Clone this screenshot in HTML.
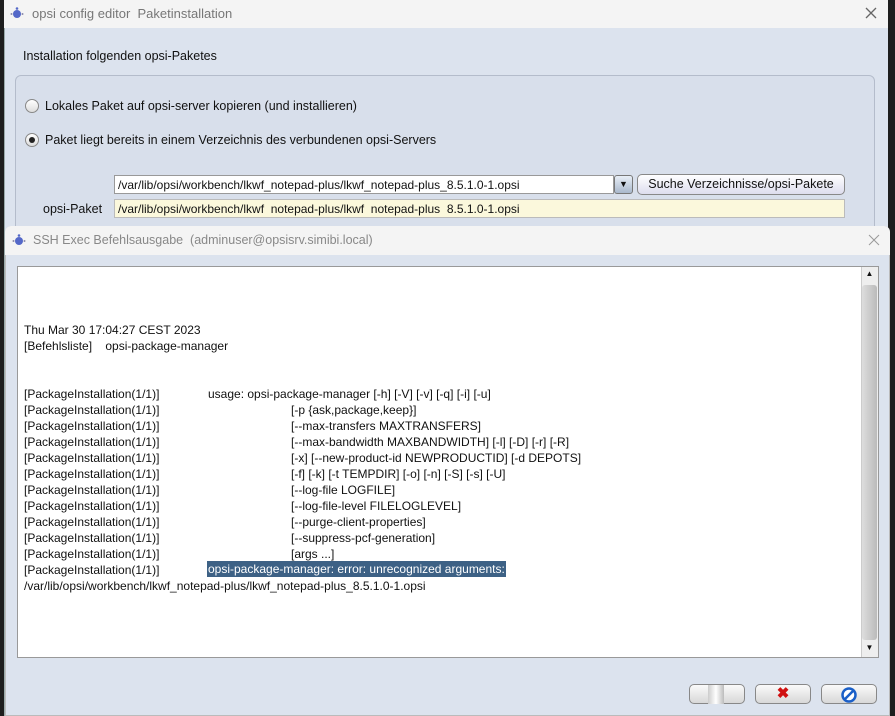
<!DOCTYPE html>
<html><head><style>
*{margin:0;padding:0;box-sizing:border-box}
body{width:895px;height:716px;overflow:hidden;background:#1e1e1e;font-family:"Liberation Sans",Arial,sans-serif;font-size:12px;color:#111;position:relative}
.a{position:absolute}
.t{white-space:pre}
</style></head><body>
<div class="a" style="left:4px;top:0;width:884px;height:716px;background:#dce3ee;border-left:1px solid #9aa"></div>
<div class="a" style="left:4px;top:0;width:884px;height:28px;background:#f4f4f4"></div>
<div class="a" style="left:10px;top:6px;width:14px;height:14px"><svg width="14" height="14"><circle cx="7" cy="8" r="4" fill="#5468c8"/><circle cx="7" cy="2.5" r="1.3" fill="#5468c8"/><circle cx="1.5" cy="8" r="1" fill="#88a"/><circle cx="12.5" cy="8" r="1" fill="#88a"/></svg></div>
<div class="a t" style="left:32px;top:6px;font-size:13px;color:#777">opsi config editor  Paketinstallation</div>
<svg class="a" style="left:865px;top:7px" width="12" height="12"><path d="M1 1L11 11M11 1L1 11" stroke="#666" stroke-width="1.3"/></svg>
<div class="a t" style="left:23px;top:49px;font-size:12.5px">Installation folgenden opsi-Paketes</div>
<div class="a" style="left:15px;top:75px;width:860px;height:160px;border:1px solid #b4bccb;border-radius:6px;background:#d8dfeb"></div>
<div class="a" style="left:25px;top:99px;width:14px;height:14px;border-radius:50%;border:1px solid #888;background:linear-gradient(#fff,#ddd)"></div>
<div class="a t" style="left:45px;top:99px;font-size:12.5px">Lokales Paket auf opsi-server kopieren (und installieren)</div>
<div class="a" style="left:25px;top:133px;width:14px;height:14px;border-radius:50%;border:1px solid #888;background:linear-gradient(#fff,#ddd)"><div class="a" style="left:3px;top:3px;width:6px;height:6px;border-radius:50%;background:#222"></div></div>
<div class="a t" style="left:45px;top:133px;font-size:12.5px">Paket liegt bereits in einem Verzeichnis des verbundenen opsi-Servers</div>
<div class="a t" style="left:114px;top:175px;width:500px;height:19px;background:#fff;border:1px solid #999;padding:2px 3px">/var/lib/opsi/workbench/lkwf_notepad-plus/lkwf_notepad-plus_8.5.1.0-1.opsi</div>
<div class="a" style="left:614px;top:175px;width:19px;height:19px;border:1px solid #777;border-radius:3px;background:linear-gradient(#e8eef6,#a9b8cc);font-size:9px;text-align:center;line-height:17px">▼</div>
<div class="a t" style="left:637px;top:174px;width:208px;height:21px;border:1px solid #888;border-radius:5px;background:linear-gradient(#fff,#dde);text-align:center;line-height:19px;font-size:12.5px">Suche Verzeichnisse/opsi-Pakete</div>
<div class="a t" style="left:43px;top:202px;font-size:12.5px">opsi-Paket</div>
<div class="a t" style="left:114px;top:199px;width:731px;height:19px;background:#fbf8dc;border:1px solid #bbb;padding:2px 3px">/var/lib/opsi/workbench/lkwf  notepad-plus/lkwf  notepad-plus  8.5.1.0-1.opsi</div>
<div class="a" style="left:5px;top:226px;width:885px;height:490px;background:#dce3ee;border:1px solid #bbb;border-radius:6px 6px 0 0"></div>
<div class="a" style="left:5px;top:226px;width:885px;height:29px;background:#f4f4f4;border-radius:6px 6px 0 0"></div>
<div class="a" style="left:12px;top:233px;width:14px;height:14px"><svg width="14" height="14"><circle cx="7" cy="8" r="4" fill="#5468c8"/><circle cx="7" cy="2.5" r="1.3" fill="#5468c8"/><circle cx="1.5" cy="8" r="1" fill="#88a"/><circle cx="12.5" cy="8" r="1" fill="#88a"/></svg></div>
<div class="a t" style="left:33px;top:233px;font-size:12.5px;color:#888">SSH Exec Befehlsausgabe  (adminuser@opsisrv.simibi.local)</div>
<svg class="a" style="left:868px;top:234px" width="12" height="12"><path d="M1 1L11 11M11 1L1 11" stroke="#999" stroke-width="1"/></svg>
<div class="a" style="left:17px;top:266px;width:862px;height:392px;background:#fff;border:1px solid #999"></div>
<div class="a" style="left:861px;top:267px;width:17px;height:390px;background:#eee;border-left:1px solid #ccc"></div>
<div class="a" style="left:863px;top:269px;width:13px;height:14px;font-size:8px;text-align:center">▲</div>
<div class="a" style="left:862px;top:285px;width:15px;height:355px;background:linear-gradient(90deg,#ddd,#bbb);border-radius:3px"></div>
<div class="a" style="left:863px;top:643px;width:13px;height:14px;font-size:8px;text-align:center">▼</div>
<div class="a t" style="left:24px;top:322px;line-height:16px">Thu Mar 30 17:04:27 CEST 2023
[Befehlsliste]    opsi-package-manager</div>
<div class="a t" style="left:24px;top:386px;line-height:16px">[PackageInstallation(1/1)]
[PackageInstallation(1/1)]
[PackageInstallation(1/1)]
[PackageInstallation(1/1)]
[PackageInstallation(1/1)]
[PackageInstallation(1/1)]
[PackageInstallation(1/1)]
[PackageInstallation(1/1)]
[PackageInstallation(1/1)]
[PackageInstallation(1/1)]
[PackageInstallation(1/1)]
[PackageInstallation(1/1)]
/var/lib/opsi/workbench/lkwf_notepad-plus/lkwf_notepad-plus_8.5.1.0-1.opsi</div>
<div class="a t" style="left:208px;top:386px;line-height:16px">usage: opsi-package-manager [-h] [-V] [-v] [-q] [-i] [-u]</div>
<div class="a t" style="left:291px;top:402px;line-height:16px">[-p {ask,package,keep}]
[--max-transfers MAXTRANSFERS]
[--max-bandwidth MAXBANDWIDTH] [-l] [-D] [-r] [-R]
[-x] [--new-product-id NEWPRODUCTID] [-d DEPOTS]
[-f] [-k] [-t TEMPDIR] [-o] [-n] [-S] [-s] [-U]
[--log-file LOGFILE]
[--log-file-level FILELOGLEVEL]
[--purge-client-properties]
[--suppress-pcf-generation]
[args ...]</div>
<div class="a t" style="left:207px;top:561px;height:16px;line-height:16px;background:#3d6185;color:#fff;padding:0 1px">opsi-package-manager: error: unrecognized arguments:</div>
<div class="a" style="left:689px;top:684px;width:56px;height:20px;border:1px solid #888;border-radius:5px;background:linear-gradient(#fafafa,#d8d8d8)"><div class="a" style="left:18px;top:0;width:16px;height:19px;background:linear-gradient(90deg,#ccc,#fff,#bbb)"></div></div>
<div class="a" style="left:755px;top:684px;width:56px;height:20px;border:1px solid #888;border-radius:5px;background:linear-gradient(#fafafa,#d8d8d8);color:#d01010;text-align:center;font-size:15px;line-height:18px;font-weight:bold">✖</div>
<div class="a" style="left:821px;top:684px;width:56px;height:20px;border:1px solid #888;border-radius:5px;background:linear-gradient(#fafafa,#d8d8d8)"><svg class="a" style="left:19px;top:2px" width="16" height="16"><circle cx="8" cy="8" r="6.5" fill="#fff" stroke="#1a5fc8" stroke-width="2.5"/><line x1="4" y1="12" x2="12" y2="4" stroke="#1a5fc8" stroke-width="2.5"/></svg></div>
</body></html>
